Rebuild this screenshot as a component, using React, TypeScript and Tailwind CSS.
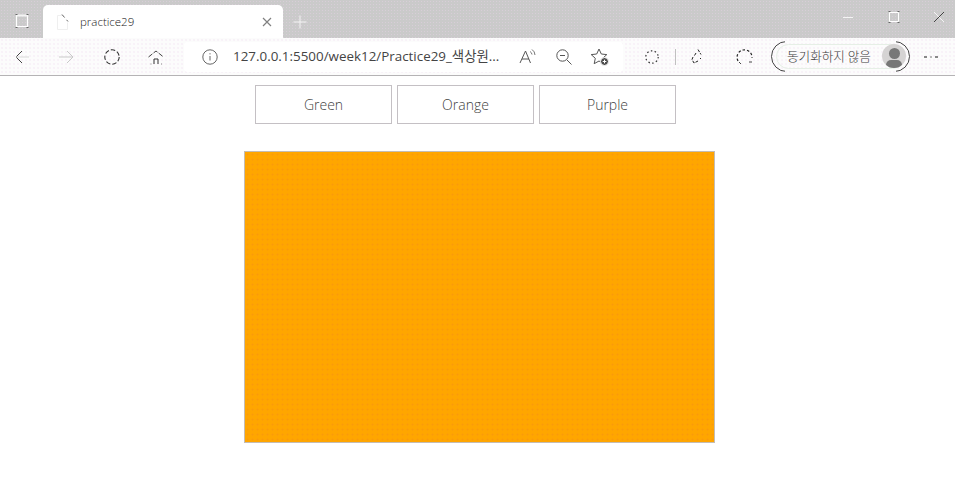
import React from "react";

const ink = "#4a4a4a";

function Ic({ w = 20, h = 20, className = "", children }: { w?: number; h?: number; className?: string; children: React.ReactNode }) {
  return (
    <svg width={w} height={h} viewBox={`0 0 ${w} ${h}`} fill="none" stroke={ink} strokeWidth="1" className={`shrink-0 ${className}`}>
      {children}
    </svg>
  );
}

function PageBtn({ label }: { label: string }) {
  return (
    <button className="w-[137px] h-[39px] border border-[#c4c0c4] bg-white text-[14px] text-[#3f3f3f] font-['Open_Sans','Liberation_Sans',sans-serif] font-light">
      {label}
    </button>
  );
}

export default function App() {
  return (
    <div className="w-[955px] h-[482px] bg-white overflow-hidden flex flex-col font-['Open_Sans','Noto_Sans_CJK_KR',sans-serif]">
      {/* Title bar */}
      <div className="h-[38px] bg-[#cacaca] bg-[radial-gradient(circle,#d8ced8_0.7px,transparent_0.9px)] bg-[length:3px_3px] flex items-end shrink-0">
        <div className="w-[43px] h-[38px] flex items-center justify-center">
          <Ic w={16} h={16} className="mt-[4px]">
            <path d="M2.5 2.5h11v11h-11z" stroke="#ffffff" strokeWidth="1.2" />
            <path d="M2.5 2.5h11" stroke="#f4f4f4" strokeWidth="2" />
            <path d="M1.5 1.5h2M12.5 1.5h2M1.5 14.5h2M12.5 14.5h2" stroke="#666666" />
          </Ic>
        </div>
        <div className="w-[240px] h-[33px] bg-white rounded-t-[5px] flex items-center pl-[12px] pr-[10px]">
          <Ic w={16} h={18} className="mr-[9px]">
            <path d="M2.5 2.5h6M2.5 2.5v14h10v-7" stroke="#efefef" />
            <path d="M7 1.5l6 7" stroke="#666666" strokeDasharray="4 3" />
          </Ic>
          <span className="text-[11.5px] text-[#222] flex-1 font-light">practice29</span>
          <Ic w={12} h={12}>
            <path d="M2 2l8 8M10 2l-8 8" stroke="#808080" strokeWidth="1.2" />
          </Ic>
        </div>
        <div className="w-[34px] h-[33px] flex items-center justify-center">
          <Ic w={16} h={16}>
            <path d="M8 1.5v13M1.5 8h13" stroke="#f4f4f4" />
          </Ic>
        </div>
        <div className="flex-1" />
        <div className="h-[38px] flex items-center pb-[4px] mr-[-6px]">
          <div className="w-[46px] flex justify-center">
            <Ic w={12} h={12}>
              <path d="M1 6.5h10" stroke="#f4f4f4" />
            </Ic>
          </div>
          <div className="w-[45px] flex justify-center">
            <Ic w={12} h={12}>
              <path d="M1.5 1.5h9v9h-9z" stroke="#ffffff" />
              <path d="M.5 .5h2M9.5 .5h2M.5 11.5h2M9.5 11.5h2" stroke="#666666" />
            </Ic>
          </div>
          <div className="w-[45px] flex justify-center">
            <Ic w={12} h={12}>
              <path d="M1 11L11 1" stroke="#444444" />
              <path d="M1 1l10 10" stroke="#f4f4f4" />
            </Ic>
          </div>
        </div>
      </div>

      {/* Toolbar */}
      <div className="h-[38px] bg-[#fcfcfc] bg-[radial-gradient(circle,#f8f2f8_0.7px,transparent_0.9px)] bg-[length:4px_4px] border-b border-[#b5b3b5] flex items-center shrink-0">
        <div className="w-[184px] h-full flex items-center">
          <div className="w-[44px] flex justify-center">
            <Ic w={18} h={18}>
              <path d="M9 3L3 9l6 6" stroke="#444444" />
              <path d="M3 9h13" stroke="#d8d8d8" />
            </Ic>
          </div>
          <div className="w-[46px] flex justify-center">
            <Ic w={18} h={18}>
              <path d="M9 3l6 6-6 6M1 9h14" stroke="#c9c9c9" />
            </Ic>
          </div>
          <div className="w-[44px] flex justify-center">
            <Ic w={18} h={18}>
              <circle cx="9" cy="9" r="7.2" stroke="#333333" strokeWidth="1.1" strokeDasharray="4.5 2" />
            </Ic>
          </div>
          <div className="w-[44px] flex justify-center">
            <Ic w={18} h={18}>
              <path d="M1.5 9L9 3l7.5 6" stroke="#444444" strokeDasharray="5 1.5" />
              <path d="M7 16v-5h4v5" stroke="#333333" />
              <path d="M3.5 16h1M14 16h1" stroke="#888888" />
            </Ic>
          </div>
        </div>

        <div className="w-[439px] h-[30px] bg-white rounded-[4px] flex items-center pl-[18px] pr-[13px]">
          <Ic w={16} h={16} className="mr-[15px]">
            <circle cx="8" cy="8" r="7.2" stroke="#666666" />
            <path d="M8 7v4.5M8 4.2v1.2" stroke="#666666" />
          </Ic>
          <span className="text-[13.4px] text-[#444] whitespace-nowrap flex-1 font-['Open_Sans','Noto_Sans_CJK_KR',sans-serif]">
            127.0.0.1:5500/week12/Practice29_색상원...
          </span>
          <div className="flex items-center gap-[17px]">
            <Ic w={20} h={18}>
              <path d="M2 15L7.5 3l5 12M4 11h7" stroke="#555555" />
              <path d="M12 3.5a4 4 0 0 1 2 3M14 1.5a7 7 0 0 1 3 5.5" stroke="#777777" />
            </Ic>
            <Ic w={18} h={18}>
              <circle cx="7.5" cy="7.5" r="5.7" stroke="#555555" />
              <path d="M5 7.5h5M12 12l4.5 4.5" stroke="#555555" />
            </Ic>
            <Ic w={20} h={20}>
              <path d="M9 2l2.3 5 5.5.6-4.1 3.7 1.1 5.4L9 14l-4.8 2.7 1.1-5.4L1.2 7.6 6.7 7z" stroke="#555555" />
              <circle cx="14.5" cy="14.5" r="4" fill="#4d4d4d" stroke="#ffffff" />
              <path d="M12.7 14.5h3.6M14.5 12.7v3.6" stroke="#ffffff" />
            </Ic>
          </div>
        </div>

        <div className="flex-1 h-full flex items-center">
          <div className="w-[37px] flex justify-end">
            <Ic w={16} h={16}>
              <circle cx="8" cy="8" r="6.2" stroke="#333333" strokeWidth="1.2" strokeDasharray="1.5 2.4" />
            </Ic>
          </div>
          <div className="w-px h-[16px] bg-[#c0c0c0] ml-[15px]" />
          <div className="w-[44px] flex justify-center">
            <Ic w={18} h={18}>
              <path d="M9 1.5l3 5M7 5L5.5 7.5M4 9l-1 2.5 2 3.5 4-2M11 11l1-1" stroke="#222222" strokeDasharray="3 1.2" />
            </Ic>
          </div>
          <div className="w-[50px] flex justify-center">
            <Ic w={18} h={18}>
              <path d="M2 13A7.5 7.5 0 1 1 16 10" stroke="#222222" strokeWidth="1.2" strokeDasharray="2.5 2" />
              <path d="M3 14l2 2M13 14h3" stroke="#444444" />
            </Ic>
          </div>
          <div className="w-[139px] h-[31px] ml-[1px] relative flex items-center pl-[16px]">
            <div className="absolute inset-x-[5px] inset-y-[3px] rounded-full border border-[#e6efe6]" />
            <div className="absolute inset-0 rounded-full border border-[#444444] [clip-path:polygon(0_0,14px_0,14px_100%,0_100%,0_0,100%_0,100%_100%,125px_100%,125px_0,100%_0)]" />
            <span className="relative text-[12.6px] text-[#3b3b3b] whitespace-nowrap font-['Noto_Sans_CJK_KR',sans-serif] font-light">동기화하지 않음</span>
            <div className="absolute right-[4px] top-[3px] w-[24px] h-[24px] rounded-full bg-[#d5d3d3] overflow-hidden flex flex-col items-center">
              <div className="w-[11px] h-[11px] rounded-full bg-[#777777] mt-[4px] shrink-0" />
              <div className="w-[16px] h-[10px] rounded-full bg-[#777777] mt-[1px] shrink-0" />
            </div>
          </div>
          <div className="flex-1 flex justify-center gap-[3px] pr-[3px]">
            <span className="w-[3px] h-[2px] bg-[#888]" />
            <span className="w-[2px] h-[2px] bg-[#bbb]" />
            <span className="w-[3px] h-[2px] bg-[#888]" />
          </div>
        </div>
      </div>

      {/* Page */}
      <div className="flex-1 bg-white flex flex-col items-start">
        <div className="flex gap-[5px] mt-[9px] ml-[255px]">
          <PageBtn label="Green" />
          <PageBtn label="Orange" />
          <PageBtn label="Purple" />
        </div>
        <div className="w-[471px] h-[292px] mt-[27px] ml-[244px] bg-[#ffa600] bg-[radial-gradient(circle,#fa9a0c_0.9px,transparent_1.1px)] bg-[length:5px_5px] border border-[#c4bcb4]" />
      </div>
    </div>
  );
}
